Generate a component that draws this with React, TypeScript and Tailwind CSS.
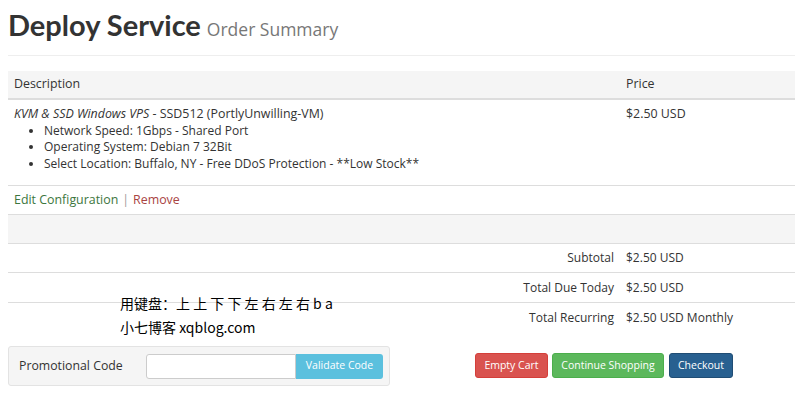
const specs = [
  "Network Speed: 1Gbps - Shared Port",
  "Operating System: Debian 7 32Bit",
  "Select Location: Buffalo, NY - Free DDoS Protection - **Low Stock**",
];

const totals = [
  { label: "Subtotal", value: "$2.50 USD" },
  { label: "Total Due Today", value: "$2.50 USD" },
  { label: "Total Recurring", value: "$2.50 USD Monthly" },
];

export default function App() {
  return (
    <div className="relative w-[800px] h-[410px] overflow-hidden bg-white pl-[8px] pr-[5px] font-['Open_Sans',sans-serif] text-[12px] text-[#333]">
      <h1 className="pt-[6px] pb-[5px] border-b border-[#eee] leading-[37px] font-['Lato',sans-serif]">
        <span className="text-[29px] font-bold text-[#333]">Deploy Service</span>
        <span className="ml-[6px] text-[17.5px] text-[#777] font-['Open_Sans',sans-serif]">Order Summary</span>
      </h1>

      <div className="mt-[15px]">
        <div className="grid grid-cols-[1fr_175px] h-[29px] items-center bg-[#f5f5f5] border-b-2 border-[#ddd] text-[12.4px]">
          <div className="pl-[6px]">Description</div>
          <div className="pl-[6px]">Price</div>
        </div>

        <div className="grid grid-cols-[1fr_175px] pt-[6px] pb-[12px] border-b border-[#ddd] leading-[16.7px]">
          <div className="pl-[6px]">
            <div className="text-[12.4px]">
              <em>KVM &amp; SSD Windows VPS</em> - SSD512 (PortlyUnwilling-VM)
            </div>
            <ul className="pl-[30px] list-disc">
              {specs.map((s) => (
                <li key={s}>{s}</li>
              ))}
            </ul>
          </div>
          <div className="pl-[6px] text-[12.4px]">$2.50 USD</div>
        </div>

        <div className="h-[29px] flex items-center pl-[6px] border-b border-[#ddd] text-[12.4px]">
          <span className="text-[#3c763d]">Edit Configuration</span>
          <span className="mx-[4px] text-[#999]">|</span>
          <span className="text-[#a94442]">Remove</span>
        </div>

        <div className="h-[29px] bg-[#f5f5f5] border-b border-[#ddd]" />

        {totals.map((t, i) => (
          <div
            key={t.label}
            className={`grid grid-cols-[1fr_175px] h-[29.5px] items-center ${i < 2 ? "border-b border-[#ddd]" : ""}`}
          >
            <div className="text-right pr-[6px]">{t.label}</div>
            <div className="pl-[6px]">{t.value}</div>
          </div>
        ))}
      </div>

      <div className="mt-[14px] flex items-start">
        <div className="w-[382px] h-[40px] flex items-center bg-[#f5f5f5] border border-[#e3e3e3] rounded-[3px] pl-[10px]">
          <span className="w-[127px] text-[12.3px]">Promotional Code</span>
          <div className="flex h-[25px]">
            <div className="w-[150px] bg-white border border-[#ccc] rounded-l-[3px]" />
            <button className="w-[87px] bg-[#5bc0de] text-white text-[10.5px] rounded-r-[3px]">Validate Code</button>
          </div>
        </div>
        <div className="ml-[85px] mt-[7px] flex gap-[4px] text-[10.5px] text-white">
          <button className="h-[25px] w-[73px] bg-[#d9534f] border border-[#d43f3a] rounded-[3px]">Empty Cart</button>
          <button className="h-[25px] w-[112px] bg-[#5cb85c] border border-[#4cae4c] rounded-[3px]">Continue Shopping</button>
          <button className="ml-[1px] h-[25px] w-[64px] bg-[#286090] border border-[#204d74] rounded-[3px]">Checkout</button>
        </div>
      </div>

      <div className="absolute left-[120px] top-[291px] text-[14px] leading-[24px] text-black font-['Noto_Sans_CJK_SC',sans-serif]">
        <div>用键盘：上 上 下 下 左 右 左 右 b a</div>
        <div>小七博客 xqblog.com</div>
      </div>
    </div>
  );
}
